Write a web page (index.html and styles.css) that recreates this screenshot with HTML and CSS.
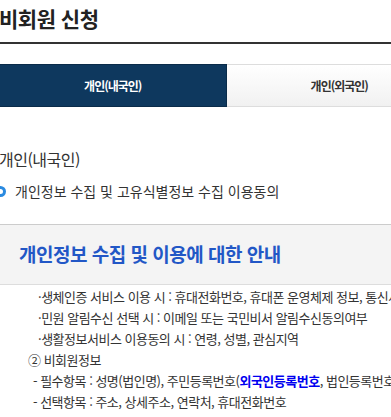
FILE: index.html
```html
<!DOCTYPE html>
<html lang="ko">
<head>
    <meta charset="UTF-8">
    <meta name="viewport" content="width=device-width, initial-scale=1.0">
    <title>비회원 신청</title>
    <link rel="stylesheet" href="styles.css">
</head>
<body>

<div class="page">
    <!-- 제목 -->
    <h1 class="page-title">비회원 신청</h1>

    <!-- 탭 -->
    <ul class="tabs">
        <li class="tab active">개인(내국인)</li>
        <li class="tab">개인(외국인)</li>
    </ul>

    <h2 class="sub-title">개인(내국인)</h2>

    <label class="agree">
        <span class="radio"></span>
        <span>개인정보 수집 및 고유식별정보 수집 이용동의</span>
    </label>

    <!-- 안내 박스 -->
    <div class="notice-head">
        <h3>개인정보 수집 및 이용에 대한 안내</h3>
    </div>

    <div class="notice-body">
        <p class="item">·생체인증 서비스 이용 시 : 휴대전화번호, 휴대폰 운영체제 정보, 통신사, 단말기 정보</p>
        <p class="item">·민원 알림수신 선택 시 : 이메일 또는 국민비서 알림수신동의여부</p>
        <p class="item">·생활정보서비스 이용동의 시 : 연령, 성별, 관심지역</p>
        <p class="group">② 비회원정보</p>
        <p class="dash">- 필수항목 : 성명(법인명), 주민등록번호(<b class="mark">외국인등록번호</b>, 법인등록번호), 휴대전화번호</p>
        <p class="dash">- 선택항목 : 주소, 상세주소, 연락처, 휴대전화번호</p>
    </div>
</div>

</body>
</html>
```

FILE: styles.css
```css
html, body {
    margin: 0;
    padding: 0;
    overflow: hidden;
}

body {
    font-family: "Noto Sans CJK KR", "Noto Sans", sans-serif;
    color: #333;
    background: #fff;
}

.page {
    width: 452px;
}

.page-title {
    margin: 0 0 0 -1px;
    height: 44px;
    padding-top: 3px;
    box-sizing: border-box;
    font-size: 21px;
    line-height: 30px;
    font-weight: bold;
    letter-spacing: -0.5px;
    color: #222;
    border-bottom: 2px solid #333;
}

.tabs {
    list-style: none;
    margin: 20px 0 0;
    padding: 0;
    display: flex;
}

.tab {
    flex: 1;
    height: 43px;
    box-sizing: border-box;
    display: flex;
    align-items: center;
    justify-content: center;
    font-size: 12px;
    font-weight: bold;
    letter-spacing: -1px;
    color: #333;
    border-top: 1px solid #ddd;
    border-bottom: 1px solid #ddd;
    background: linear-gradient(to bottom, #fff, #f1f1f1);
}

.tab.active {
    color: #fff;
    background: #0e385e;
    border-color: #0a2b49;
    border-right: 1px solid #0a2b49;
}

.sub-title {
    margin: 40px 0 0 -1px;
    font-size: 16px;
    line-height: 24px;
    font-weight: normal;
    letter-spacing: -0.5px;
    color: #333;
}

.agree {
    display: flex;
    align-items: center;
    gap: 9px;
    margin: 8px 0 0 -5px;
    font-size: 14px;
    line-height: 24px;
    color: #333;
}

.radio {
    width: 11px;
    height: 11px;
    box-sizing: border-box;
    border: 3px solid #2a8ae0;
    border-radius: 50%;
}

.notice-head {
    margin-top: 21px;
    width: 391px;
    height: 61px;
    box-sizing: border-box;
    padding: 15px 0 0 19px;
    background: #f4f4f4;
    border-top: 1px solid #ccc;
    border-bottom: 1px solid #ddd;
}

.notice-head h3 {
    margin: 0;
    font-size: 19px;
    line-height: 28px;
    font-weight: bold;
    letter-spacing: -0.5px;
    color: #2257c6;
}

.notice-body {
    padding-top: 1px;
    font-size: 13px;
    letter-spacing: -0.5px;
    color: #333;
    white-space: nowrap;
}

.notice-body p {
    margin: 0;
    line-height: 21px;
}

.item {
    padding-left: 38px;
}

.group {
    padding-left: 28px;
}

.dash {
    padding-left: 33px;
}

.mark {
    color: #0000f0;
}
```
